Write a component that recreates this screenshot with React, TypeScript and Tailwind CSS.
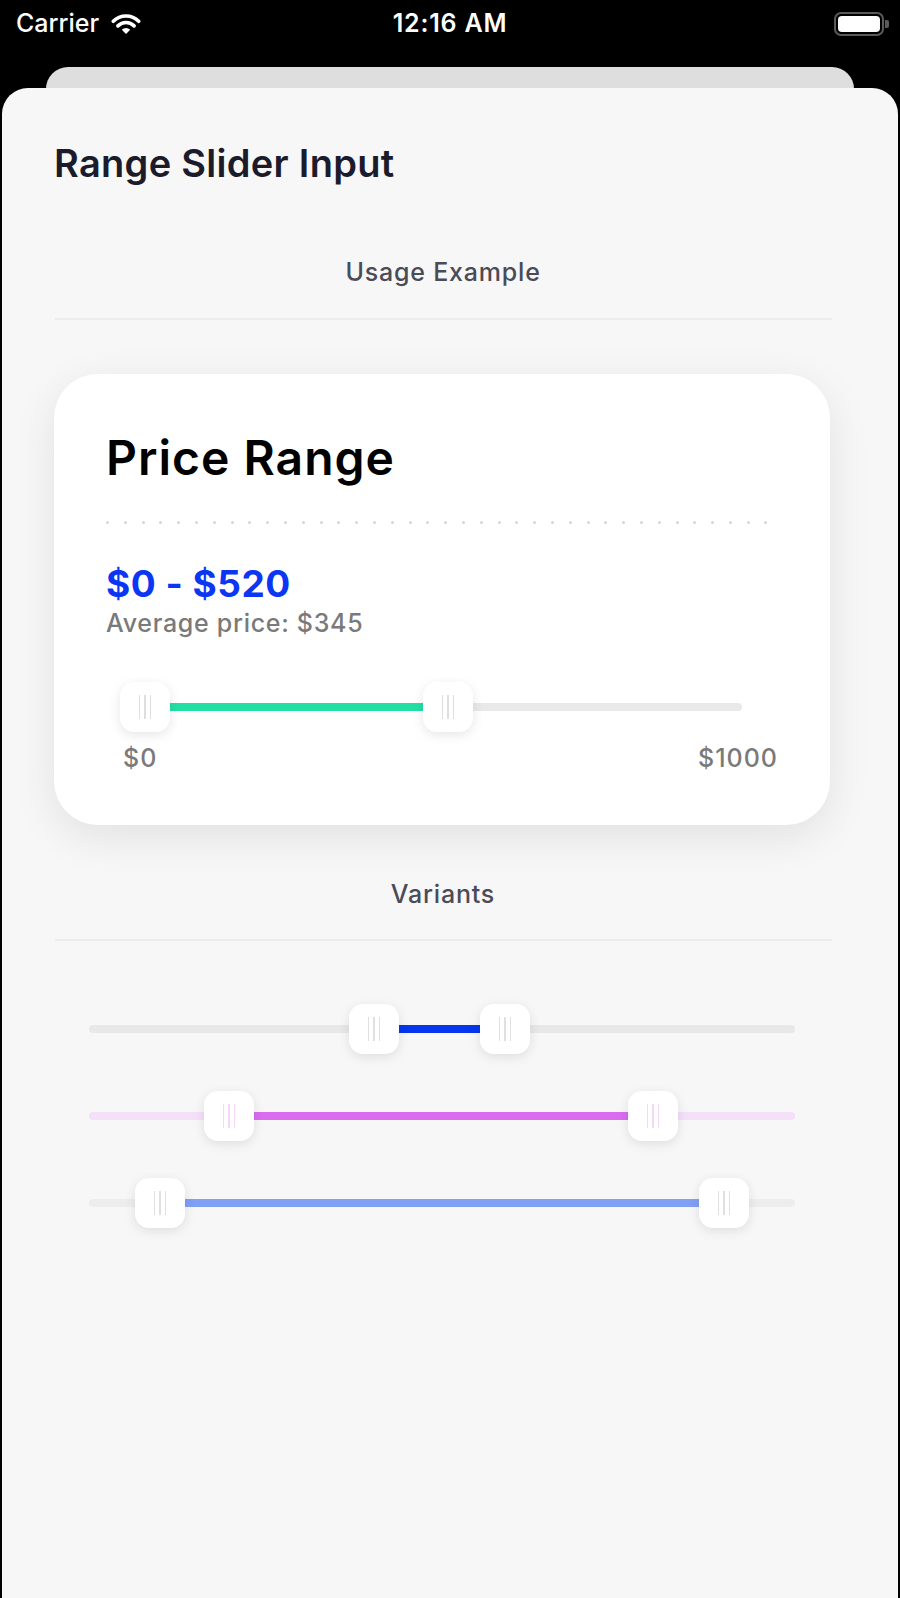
import React from "react";

type SliderProps = {
  width: number;
  trackFrom: number;
  trackTo: number;
  lo: number;
  hi: number;
  trackColor: string;
  fillColor: string;
  lineColor: string;
};

function Thumb({ left, lineColor }: { left: number; lineColor: string }) {
  return (
    <div
      className="absolute top-0 w-[50px] h-[50px] rounded-[14px] bg-white shadow-[0_3px_12px_rgba(0,0,0,0.10)] flex items-center justify-center gap-[4px]"
      style={{ left: left - 25 }}
    >
      <div className="w-[1.5px] h-[24px]" style={{ background: lineColor }} />
      <div className="w-[1.5px] h-[24px]" style={{ background: lineColor }} />
      <div className="w-[1.5px] h-[24px]" style={{ background: lineColor }} />
    </div>
  );
}

function RangeSlider({ width, trackFrom, trackTo, lo, hi, trackColor, fillColor, lineColor }: SliderProps) {
  return (
    <div className="relative h-[50px]" style={{ width }}>
      <div
        className="absolute top-[21px] h-[8px] rounded-full"
        style={{ left: trackFrom, width: trackTo - trackFrom, background: trackColor }}
      />
      <div className="absolute top-[21px] h-[8px]" style={{ left: lo, width: hi - lo, background: fillColor }} />
      <Thumb left={lo} lineColor={lineColor} />
      <Thumb left={hi} lineColor={lineColor} />
    </div>
  );
}

function StatusBar() {
  return (
    <div className="relative h-[67px] flex items-start justify-between px-[16px] pt-[8px] text-white font-['Inter',sans-serif]">
      <div className="flex items-center gap-[12px]">
        <span className="text-[25px] font-medium leading-[30px]">Carrier</span>
        <svg width="30" height="22" viewBox="0 0 30 22" className="mt-[1px]">
          <path d="M2.3 8.3 A18 18 0 0 1 27.7 8.3" fill="none" stroke="white" strokeWidth="3.6" strokeLinecap="round" />
          <path d="M6.9 12.9 A11.5 11.5 0 0 1 23.1 12.9" fill="none" stroke="white" strokeWidth="3.6" strokeLinecap="round" />
          <path d="M15 21 L10.8 16.8 A6 6 0 0 1 19.2 16.8 Z" fill="white" />
        </svg>
      </div>
      <span className="absolute left-1/2 -translate-x-1/2 top-[8px] text-[25px] font-semibold leading-[30px] tracking-[0.8px]">
        12:16 AM
      </span>
      <div className="flex items-center mt-[4px] mr-[-5px]">
        <div className="w-[50px] h-[24px] rounded-[7px] border-[2px] border-[#5a5a5a] p-[2px]">
          <div className="w-full h-full rounded-[4px] bg-white" />
        </div>
        <div className="w-[4px] h-[8px] rounded-r-[2px] bg-[#5a5a5a] ml-[1px]" />
      </div>
    </div>
  );
}

export default function App() {
  const dots = Array.from({ length: 38 });
  return (
    <div className="w-[900px] h-[1598px] bg-black overflow-hidden font-['Inter',sans-serif]">
      <StatusBar />
      {/* card behind the sheet */}
      <div className="mx-[46px] h-[40px] rounded-t-[22px] bg-[#dedede]" />
      {/* front sheet */}
      <div className="relative -mt-[19px] mx-[2px] h-[1530px] rounded-t-[26px] bg-[#f7f7f7] pl-[52px] pr-[66px] pt-[53px]">
        <h1 className="text-[38px] font-semibold leading-[44px] text-[#1b1b2b] tracking-[0.3px]">Range Slider Input</h1>

        <div className="mt-[71px] text-center text-[25px] font-medium leading-[32px] text-[#4b4b57] tracking-[0.8px]">
          Usage Example
        </div>
        <div className="mt-[30px] h-[2px] bg-[#ececec] ml-[1px]" />

        <div className="mt-[54px] w-[776px] rounded-[44px] bg-white shadow-[0_12px_44px_rgba(0,0,0,0.09)] px-[52px] pt-[56px] pb-[52px]">
          <div className="text-[48px] font-semibold leading-[56px] text-black tracking-[1px]">Price Range</div>
          <div className="mt-[35px] w-[662px] flex justify-between items-center h-[3px]">
            {dots.map((_, i) => (
              <div key={i} className="w-[3px] h-[3px] rounded-full bg-[#d6d6d6]" />
            ))}
          </div>
          <div className="mt-[38px] text-[37px] font-bold leading-[44px] text-[#0b37f4] tracking-[0.5px]">$0 - $520</div>
          <div className="mt-[2px] text-[25px] font-medium leading-[30px] text-[#7a7a7a] tracking-[0.7px]">
            Average price: $345
          </div>
          <div className="mt-[44px] ml-[14px]">
            <RangeSlider
              width={640}
              trackFrom={25}
              trackTo={622}
              lo={25}
              hi={328}
              trackColor="#e9e9e9"
              fillColor="#22e0a4"
              lineColor="#dedede"
            />
          </div>
          <div className="mt-[11px] flex justify-between pl-[17px] text-[25px] font-medium leading-[30px] text-[#7a7a7a] tracking-[1px]">
            <span>$0</span>
            <span>$1000</span>
          </div>
        </div>

        <div className="mt-[53px] text-center text-[25px] font-medium leading-[32px] text-[#4b4b57] tracking-[0.8px]">
          Variants
        </div>
        <div className="mt-[29px] h-[2px] bg-[#ececec] ml-[1px]" />

        <div className="mt-[63px] pl-[35px] flex flex-col gap-[37px]">
          <RangeSlider
            width={706}
            trackFrom={0}
            trackTo={706}
            lo={285}
            hi={416}
            trackColor="#e8e8e8"
            fillColor="#0636ee"
            lineColor="#e0e0e0"
          />
          <RangeSlider
            width={706}
            trackFrom={0}
            trackTo={706}
            lo={140}
            hi={564}
            trackColor="#f4e0f9"
            fillColor="#da6cf0"
            lineColor="#f3d8f9"
          />
          <RangeSlider
            width={706}
            trackFrom={0}
            trackTo={706}
            lo={71}
            hi={635}
            trackColor="#ededed"
            fillColor="#80a0f5"
            lineColor="#e0e0e0"
          />
        </div>
      </div>
    </div>
  );
}
